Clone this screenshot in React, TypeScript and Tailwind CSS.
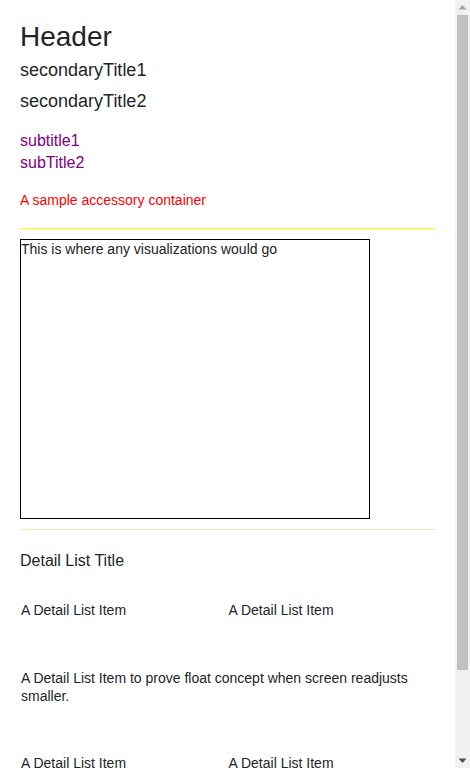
import React from "react";

function FakeScrollbar() {
  return (
    <div className="flex h-[768px] w-[15px] shrink-0 flex-col bg-[#f1f1f1]">
      <div className="flex h-[15px] items-center justify-center">
        <svg width="15" height="15" viewBox="0 0 15 15">
          <polygon points="3.5,9.5 11.5,9.5 7.5,5" fill="#a3a3a3" />
        </svg>
      </div>
      <div className="flex-1 px-[2px]">
        <div className="h-[655px] w-full bg-[#c1c1c1]" />
      </div>
      <div className="flex h-[15px] items-center justify-center">
        <svg width="15" height="15" viewBox="0 0 15 15">
          <polygon points="3.5,5.5 11.5,5.5 7.5,10" fill="#505050" />
        </svg>
      </div>
    </div>
  );
}

export default function App() {
  return (
    <div className="flex h-[768px] w-full overflow-hidden bg-white">
      <div className="min-w-0 flex-1 overflow-hidden px-5 pt-[21px] font-['Liberation_Sans',Arial,sans-serif] text-[#212529]">
        <h1 className="text-[28px] leading-[32px] font-normal">Header</h1>
        <h2 className="mt-[6px] text-[18px] leading-[22px] font-normal">secondaryTitle1</h2>
        <h2 className="mt-[9px] text-[18px] leading-[22px] font-normal">secondaryTitle2</h2>
        <div className="mt-[18px] text-[16px] leading-[22px] text-[#800080]">
          <div>subtitle1</div>
          <div>subTitle2</div>
        </div>
        <div className="mt-[17px] text-[14px] leading-[18px] text-[#ff0000]">
          A sample accessory container
        </div>
        <div className="mt-[19px] h-px bg-[#ffff00]" />
        <div className="mt-[10px] h-[280px] w-[350px] border border-black text-[14px] leading-[18px] text-[#222222]">
          This is where any visualizations would go
        </div>
        <div className="mt-[10px] h-px bg-[#ededc0]" />
        <div className="mt-[21px] text-[16px] leading-[20px]">Detail List Title</div>
        <div className="mt-[30px] grid grid-cols-2 gap-y-[49px] text-[14px] leading-[18px]">
          <div className="px-px">A Detail List Item</div>
          <div className="px-px">A Detail List Item</div>
          <div className="col-span-2 px-px pt-px">
            A Detail List Item to prove float concept when screen readjusts smaller.
          </div>
          <div className="px-px">A Detail List Item</div>
          <div className="px-px">A Detail List Item</div>
        </div>
        <div className="h-[94px]" />
      </div>
      <FakeScrollbar />
    </div>
  );
}
